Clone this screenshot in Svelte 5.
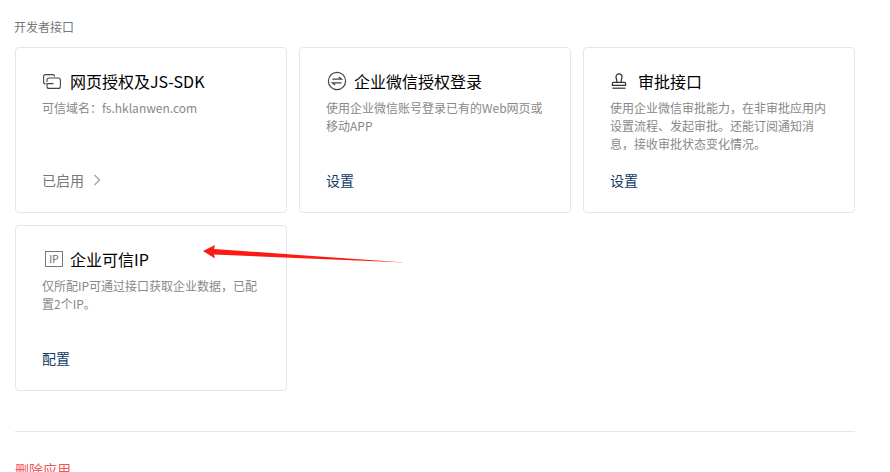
<script>
  const cards = [
    { icon: 'copy', title: '网页授权及JS-SDK', desc: '可信域名：fs.hklanwen.com', action: '已启用', enabled: true },
    { icon: 'swap', title: '企业微信授权登录', desc: '使用企业微信账号登录已有的Web网页或移动APP', action: '设置' },
    { icon: 'stamp', title: '审批接口', desc: '使用企业微信审批能力，在非审批应用内设置流程、发起审批。还能订阅通知消息，接收审批状态变化情况。', action: '设置' },
    { icon: 'ip', title: '企业可信IP', desc: '仅所配IP可通过接口获取企业数据，已配置2个IP。', action: '配置' },
  ];
</script>

<div class="page">
  <div class="label">开发者接口</div>

  <div class="grid">
    {#each cards as card}
      <div class="card">
        <div class="card-title">
          <span class="icon">
            {#if card.icon === 'copy'}
              <svg width="18" height="15" viewBox="0 0 18 15" fill="none" stroke="#444" stroke-width="1.1">
                <path d="M2.6 10 Q0.6 10 0.6 8 V2.6 Q0.6 0.6 2.6 0.6 H9.6 Q11.6 0.6 11.6 2.6" />
                <path d="M4 8 V6 Q4 4 6 4 H15.4 Q17.4 4 17.4 6 V12.4 Q17.4 14.4 15.4 14.4 H6 Q4 14.4 4 12.4 V9.6 H10.5" />
              </svg>
            {:else if card.icon === 'swap'}
              <svg width="20" height="20" viewBox="0 0 20 20" fill="none" stroke="#444" stroke-width="1.2">
                <circle cx="10" cy="10" r="8.6" />
                <path d="M5.4 8.2 H14.6 L11.8 6" />
                <path d="M14.6 11.8 H5.4 L8.2 14" />
              </svg>
            {:else if card.icon === 'stamp'}
              <svg width="16" height="16" viewBox="0 0 16 16" fill="none" stroke="#333" stroke-width="1.2">
                <path d="M5.8 9.4 V8 C5.8 6.6 5 5.8 5 3.8 A3 3 0 0 1 11 3.8 C11 5.8 10.2 6.6 10.2 8 V9.4" />
                <path d="M1.4 12.4 V10.4 Q1.4 9.4 2.4 9.4 H13.6 Q14.6 9.4 14.6 10.4 V12.4 Z" />
                <path d="M1.4 15.2 H14.6" />
              </svg>
            {:else}
              <span class="ip-box">IP</span>
            {/if}
          </span>
          {card.title}
        </div>
        <p class="card-desc">{card.desc}</p>
        <div class="card-action" class:enabled={card.enabled}>
          {card.action}
          {#if card.enabled}
            <svg class="chevron" width="8" height="12" viewBox="0 0 8 12" fill="none" stroke="#aaa" stroke-width="1.5">
              <path d="M1.5 1 L6.5 6 L1.5 11" />
            </svg>
          {/if}
        </div>
      </div>
    {/each}
  </div>

  <div class="divider"></div>
  <div class="delete">删除应用</div>

  <svg class="arrow" width="210" height="24" viewBox="0 0 210 24">
    <path d="M0 8 L12 2 L11 6 L202 19.6 L11 11.5 L12 15.5 Z" fill="#fb1b12" />
  </svg>
</div>

<style>
  :global(body) {
    margin: 0;
    background: #fff;
    overflow: hidden;
  }

  .page {
    position: relative;
    width: 840px;
    height: 472px;
    overflow: hidden;
    padding-left: 15px;
    font-family: "Noto Sans CJK SC", "Noto Sans", sans-serif;
  }

  .label {
    margin: 18px 0 11px -1px;
    font-size: 12px;
    line-height: 18px;
    color: #787878;
  }

  .grid {
    display: grid;
    grid-template-columns: repeat(3, 1fr);
    grid-auto-rows: 166px;
    gap: 12px;
  }

  .card {
    display: flex;
    flex-direction: column;
    box-sizing: border-box;
    padding: 21px 26px 22px;
    border: 1px solid #e4e6e9;
    border-radius: 4px;
  }

  .card-title {
    display: flex;
    align-items: center;
    font-size: 16px;
    line-height: 24px;
    color: #000;
  }

  .icon {
    display: flex;
    align-items: center;
    flex: none;
    width: 28px;
    padding-left: 1px;
    box-sizing: border-box;
  }

  .ip-box {
    box-sizing: border-box;
    width: 18px;
    height: 16px;
    margin-left: 2px;
    border: 1px solid #777;
    font-size: 10px;
    line-height: 14px;
    text-align: center;
    color: #666;
  }

  .card-desc {
    margin: 6px 0 0;
    font-size: 12px;
    line-height: 18px;
    color: #888;
  }

  .card-action {
    display: flex;
    align-items: center;
    gap: 9px;
    margin-top: auto;
    font-size: 14px;
    line-height: 20px;
    color: #0f3a66;
  }

  .card-action.enabled {
    color: #787878;
  }

  .divider {
    height: 1px;
    margin-top: 40px;
    background: #e4e6e9;
  }

  .delete {
    margin-top: 27px;
    font-size: 14px;
    line-height: 20px;
    color: #f2555b;
  }

  .arrow {
    position: absolute;
    left: 203px;
    top: 243px;
  }
</style>
